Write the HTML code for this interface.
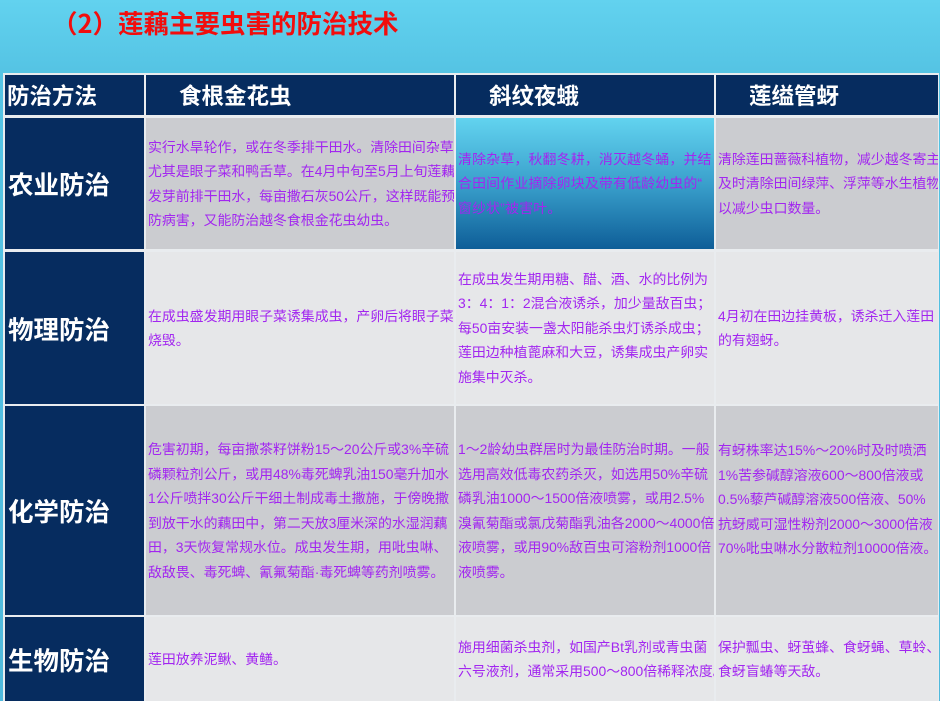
<!DOCTYPE html>
<html><head><meta charset="utf-8"><style>
*{margin:0;padding:0;box-sizing:border-box}
body{width:940px;height:701px;overflow:hidden;background:linear-gradient(180deg,#62d2ef 0%,#55c4e4 70px,#4fb9dc 100%);font-family:"Liberation Sans","Noto Sans CJK SC",sans-serif;position:relative}
.t{position:absolute;left:52px;top:4px;font-size:25.5px;font-weight:bold;color:#f20d0d;font-family:"Noto Sans CJK SC",sans-serif}
.c{position:absolute;display:flex;align-items:center;overflow:hidden}
.h{background:#062c5f;color:#fff;font-weight:bold;font-size:22.5px}
.m{background:#062c5f;color:#fff;font-weight:bold;font-size:25.5px;padding-left:3px}
.d{color:#a226f0;font-size:13.9px;line-height:24.5px;padding-left:2px;white-space:nowrap}
.g1{background:#cbccd0}.g2{background:#e6e7e9}
.bl{background:linear-gradient(180deg,#62d3ef 0%,#3aa0cc 50%,#0e5e98 100%)}
</style></head><body>
<div class="t">（2）莲藕主要虫害的防治技术</div>
<div style="position:absolute;left:3px;top:73px;width:936px;height:628px;background:#e9ecef"></div>
<div class="c h" style="left:5px;top:75px;width:139px;height:40px;padding-left:2px">防治方法</div>
<div class="c h" style="left:146px;top:75px;width:308px;height:40px;padding-left:33px">食根金花虫</div>
<div class="c h" style="left:456px;top:75px;width:258px;height:40px;padding-left:33px">斜纹夜蛾</div>
<div class="c h" style="left:716px;top:75px;width:222px;height:40px;padding-left:33px">莲缢管蚜</div>

<div class="c m" style="left:5px;top:118px;width:139px;height:131px">农业防治</div>
<div class="c d g1" style="left:146px;top:118px;width:308px;height:131px">实行水旱轮作，或在冬季排干田水。清除田间杂草<br>尤其是眼子菜和鸭舌草。在4月中旬至5月上旬莲藕<br>发芽前排干田水，每亩撒石灰50公斤，这样既能预<br>防病害，又能防治越冬食根金花虫幼虫。</div>
<div class="c d bl" style="left:456px;top:118px;width:258px;height:131px;letter-spacing:0.2px">清除杂草，秋翻冬耕，消灭越冬蛹，并结<br>合田间作业摘除卵块及带有低龄幼虫的“<br>窗纱状”被害叶。</div>
<div class="c d g1" style="left:716px;top:118px;width:222px;height:131px">清除莲田蔷薇科植物，减少越冬寄主<br>及时清除田间绿萍、浮萍等水生植物<br>以减少虫口数量。</div>

<div class="c m" style="left:5px;top:252px;width:139px;height:152px">物理防治</div>
<div class="c d g2" style="left:146px;top:252px;width:308px;height:152px">在成虫盛发期用眼子菜诱集成虫，产卵后将眼子菜<br>烧毁。</div>
<div class="c d g2" style="left:456px;top:252px;width:258px;height:152px">在成虫发生期用糖、醋、酒、水的比例为<br>3：4：1：2混合液诱杀，加少量敌百虫；<br>每50亩安装一盏太阳能杀虫灯诱杀成虫；<br>莲田边种植蓖麻和大豆，诱集成虫产卵实<br>施集中灭杀。</div>
<div class="c d g2" style="left:716px;top:252px;width:222px;height:152px">4月初在田边挂黄板，诱杀迁入莲田<br>的有翅蚜。</div>

<div class="c m" style="left:5px;top:406px;width:139px;height:209px">化学防治</div>
<div class="c d g1" style="left:146px;top:406px;width:308px;height:209px">危害初期，每亩撒茶籽饼粉15～20公斤或3%辛硫<br>磷颗粒剂公斤，或用48%毒死蜱乳油150毫升加水<br>1公斤喷拌30公斤干细土制成毒土撒施，于傍晚撒<br>到放干水的藕田中，第二天放3厘米深的水湿润藕<br>田，3天恢复常规水位。成虫发生期，用吡虫啉、<br>敌敌畏、毒死蜱、氰氟菊酯·毒死蜱等药剂喷雾。</div>
<div class="c d g1" style="left:456px;top:406px;width:258px;height:209px">1～2龄幼虫群居时为最佳防治时期。一般<br>选用高效低毒农药杀灭，如选用50%辛硫<br>磷乳油1000～1500倍液喷雾，或用2.5%<br>溴氰菊酯或氯戊菊酯乳油各2000～4000倍<br>液喷雾，或用90%敌百虫可溶粉剂1000倍<br>液喷雾。</div>
<div class="c d g1" style="left:716px;top:406px;width:222px;height:209px;padding-bottom:22px">有蚜株率达15%～20%时及时喷洒<br>1%苦参碱醇溶液600～800倍液或<br>0.5%藜芦碱醇溶液500倍液、50%<br>抗蚜威可湿性粉剂2000～3000倍液<br>70%吡虫啉水分散粒剂10000倍液。</div>

<div class="c m" style="left:5px;top:617px;width:139px;height:84px">生物防治</div>
<div class="c d g2" style="left:146px;top:617px;width:308px;height:84px">莲田放养泥鳅、黄鳝。</div>
<div class="c d g2" style="left:456px;top:617px;width:258px;height:84px">施用细菌杀虫剂，如国产Bt乳剂或青虫菌<br>六号液剂，通常采用500～800倍稀释浓度。</div>
<div class="c d g2" style="left:716px;top:617px;width:222px;height:84px">保护瓢虫、蚜茧蜂、食蚜蝇、草蛉、<br>食蚜盲蝽等天敌。</div>
</body></html>
